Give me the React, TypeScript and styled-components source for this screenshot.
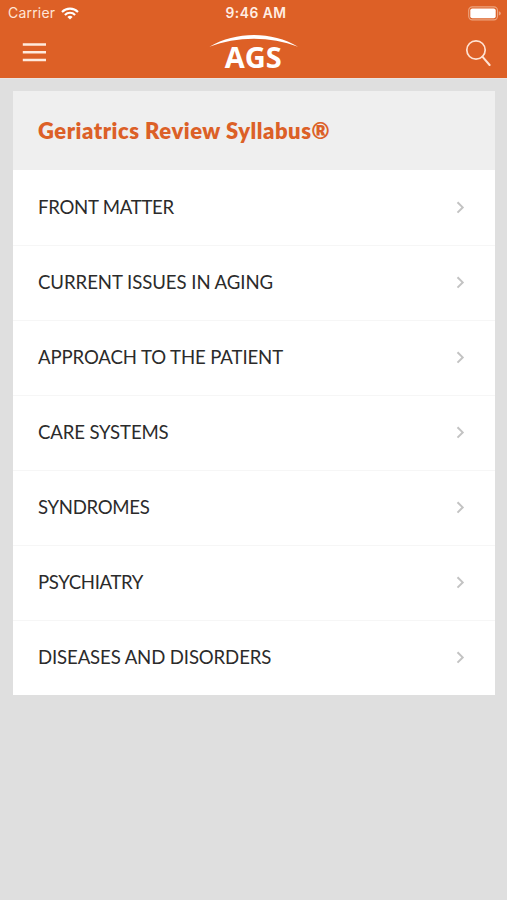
import React from 'react';
import styled, { createGlobalStyle } from 'styled-components';

const GlobalStyle = createGlobalStyle`
  * { box-sizing: border-box; }
  html, body { margin: 0; padding: 0; background: #dfdfdf; }
  body { font-family: Lato, "Open Sans", sans-serif; }
`;

const Screen = styled.div`
  width: 507px;
  height: 900px;
  overflow: hidden;
  background: #dfdfdf;
`;

const TopArea = styled.header`
  height: 78px;
  background: #dd6026;
  box-shadow: 0 1px #eae4e1;
  color: #fff;
`;

const StatusBar = styled.div`
  display: grid;
  grid-template-columns: 1fr auto 1fr;
  align-items: center;
  height: 26px;
  padding: 0 6px 0 8px;
  font-family: Inter, sans-serif;
  font-size: 14px;
  line-height: 26px;
`;

const Carrier = styled.div`
  display: flex;
  align-items: center;
  gap: 6px;
  color: #ffe5d6;
  letter-spacing: 0.2px;
`;

const Clock = styled.div`
  padding-left: 3px;
  font-weight: 600;
  font-size: 13.8px;
  letter-spacing: 0.5px;
  color: #ffeee4;
`;

const Battery = styled.svg`
  justify-self: end;
  display: block;
`;

const NavBar = styled.nav`
  display: grid;
  grid-template-columns: 1fr auto 1fr;
  height: 52px;
  padding: 0 16px 0 22px;
`;

const IconButton = styled.button<{ $end?: boolean }>`
  display: flex;
  justify-self: ${p => (p.$end ? 'end' : 'start')};
  align-self: center;
  padding: 0;
  border: 0;
  background: none;
`;

const Logo = styled.svg`
  display: block;
  margin-right: 5px;
  overflow: visible;
`;

const Card = styled.main`
  width: 482px;
  margin: 13px 0 0 13px;
  background: #fff;
`;

const CardTitle = styled.h1`
  display: flex;
  align-items: center;
  height: 79px;
  margin: 0;
  padding: 0 25px 1px;
  background: #efefef;
  color: #dc6027;
  font-size: 22px;
  font-weight: 800;
  letter-spacing: 0.52px;
  white-space: nowrap;
`;

const List = styled.ul`
  margin: 0;
  padding: 0;
  list-style: none;
`;

const Row = styled.li`
  display: flex;
  align-items: center;
  justify-content: space-between;
  height: 75px;
  padding: 0 29px 1px 25px;
  & + & { box-shadow: inset 0 1px #f6f6f6; }
`;

const RowLabel = styled.span<{ $tracking: number }>`
  color: #2b2b2b;
  font-size: 18.6px;
  line-height: 24px;
  letter-spacing: ${p => p.$tracking}px;
  white-space: nowrap;
`;

const topics = [
  { name: 'FRONT MATTER', tracking: -0.27 },
  { name: 'CURRENT ISSUES IN AGING', tracking: -0.06 },
  { name: 'APPROACH TO THE PATIENT', tracking: -0.12 },
  { name: 'CARE SYSTEMS', tracking: -0.15 },
  { name: 'SYNDROMES', tracking: -0.3 },
  { name: 'PSYCHIATRY', tracking: -0.36 },
  { name: 'DISEASES AND DISORDERS', tracking: -0.13 },
];

export default function App() {
  return (
    <Screen>
      <GlobalStyle />
      <TopArea>
        <StatusBar>
          <Carrier>
            Carrier
            <svg width="18" height="13" viewBox="0 0 18 13" fill="none" stroke="#fff" strokeWidth="2.1">
              <path d="M1 4.9a11.4 11.4 0 0 1 16 0" />
              <path d="M3.9 7.9a7.2 7.2 0 0 1 10.2 0" />
              <path d="M9 12.6 6.4 10a3.7 3.7 0 0 1 5.2 0Z" fill="#fff" stroke="none" />
            </svg>
          </Carrier>
          <Clock>9:46 AM</Clock>
          <Battery width="33" height="15" viewBox="0 0 33 15">
            <rect x="0.7" y="0.9" width="28.8" height="13" rx="3.6" fill="none" stroke="#eda47f" strokeWidth="1.1" />
            <rect x="2.3" y="2.6" width="25.4" height="9.6" rx="2" fill="#fff" />
            <path d="M30.8 5.3q2 .5 2 2.1t-2 2.1Z" fill="#eda47f" />
          </Battery>
        </StatusBar>
        <NavBar>
          <IconButton aria-label="Menu">
            <svg width="24" height="20" viewBox="0 0 24 20" stroke="#ffeadd" strokeWidth="2.6">
              <path d="M.8 2.5H24M.8 10.3H24M.8 18H24" />
            </svg>
          </IconButton>
          <Logo width="90" height="50" viewBox="0 0 90 50" role="img" aria-label="AGS">
            <path d="M.5 20.8C27 5.2 63 5.2 89 20.8C61 10 28 10 .5 20.8Z" fill="#fff" />
            <text x="15.8" y="42.3" textLength="57" lengthAdjust="spacingAndGlyphs" fill="#fff" fontFamily="Open Sans" fontWeight="700" fontSize="28.8">AGS</text>
          </Logo>
          <IconButton $end aria-label="Search">
            <svg width="26" height="28" viewBox="0 0 26 28" fill="none" stroke="#ffe2d2" strokeWidth="1.7">
              <circle cx="11" cy="12" r="9.2" />
              <path d="M17.4 18.6 24.6 27" strokeWidth="2" strokeLinecap="round" />
            </svg>
          </IconButton>
        </NavBar>
      </TopArea>
      <Card>
        <CardTitle>Geriatrics Review Syllabus®</CardTitle>
        <List>
          {topics.map(t => (
            <Row key={t.name}>
              <RowLabel $tracking={t.tracking}>{t.name}</RowLabel>
              <svg width="10" height="14" viewBox="0 0 10 14" fill="none" stroke="#c3c3c3" strokeWidth="2">
                <path d="M1.5 2.2 6.7 7.4 1.5 12.6" />
              </svg>
            </Row>
          ))}
        </List>
      </Card>
    </Screen>
  );
}
